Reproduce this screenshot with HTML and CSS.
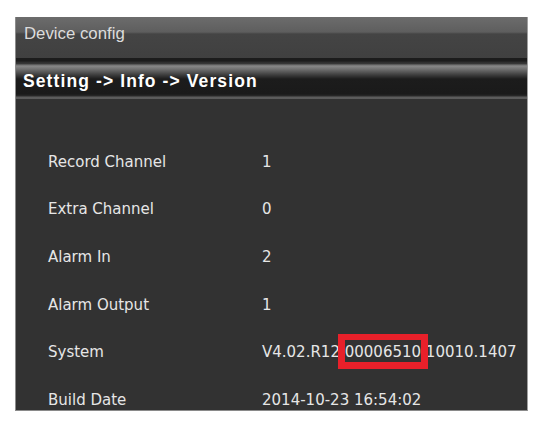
FILE: index.html
```html
<!DOCTYPE html>
<html>
<head>
<meta charset="utf-8">
<link rel="stylesheet" href="styles.css">
</head>
<body>
<div class="window">
  <div class="titlebar"><span class="title">Device config</span></div>
  <div class="divider"></div>
  <div class="crumb"><span class="crumb-text">Setting -&gt; Info -&gt; Version</span></div>
  <div class="content">
    <div class="row"><span class="label">Record Channel</span><span class="value">1</span></div>
    <div class="row"><span class="label">Extra Channel</span><span class="value">0</span></div>
    <div class="row"><span class="label">Alarm In</span><span class="value">2</span></div>
    <div class="row"><span class="label">Alarm Output</span><span class="value">1</span></div>
    <div class="row"><span class="label">System</span><span class="value">V4.02.R12 <span class="highlight">00006510</span> 10010.1407</span></div>
    <div class="row"><span class="label">Build Date</span><span class="value">2014-10-23 16:54:02</span></div>
  </div>
</div>
</body>
</html>
```

FILE: styles.css
```css
html, body {
  margin: 0;
  padding: 0;
  background: #ffffff;
}
body {
  padding: 17px 0 0 15px;
}
.window {
  width: 513px;
  height: 394px;
  box-sizing: border-box;
  border-left: 1px solid #8c8c8c;
  border-right: 1px solid #a0a0a0;
  border-bottom: 1px solid #8a8a8a;
  background: #323232;
  display: flex;
  flex-direction: column;
  overflow: hidden;
}
.titlebar {
  flex: none;
  height: 41px;
  box-sizing: border-box;
  padding: 7px 0 0 8px;
  background: linear-gradient(#6c6c6c 0px, #5e5e5e 15px, #444444 17px, #404040 100%);
}
.title {
  font-family: "Liberation Sans", Arial, sans-serif;
  font-size: 16.8px;
  color: #dcdcdc;
}
.divider {
  flex: none;
  height: 6px;
  background: linear-gradient(#1c1c1c 0px, #1c1c1c 3px, #2c2c2c 4px, #3a3a3a 6px);
}
.crumb {
  flex: none;
  height: 35px;
  box-sizing: border-box;
  padding: 7px 0 0 7px;
  background: linear-gradient(#4a4a4a 0px, #888888 2px, #7a7a7a 4px, #3c3c3c 11px, #1c1c1c 15px, #1a1a1a 30px, #2a2a2a 32px, #5c5c5c 33px, #5a5a5a 35px);
}
.crumb-text {
  font-family: "Liberation Sans", Arial, sans-serif;
  font-weight: bold;
  font-size: 17.5px;
  letter-spacing: 1.1px;
  color: #ffffff;
}
.content {
  flex: 1;
  min-height: 0;
  padding: 39px 0 0 32px;
  display: flex;
  flex-direction: column;
}
.row {
  flex: none;
  height: 47.6px;
  display: flex;
  align-items: center;
  font-family: "DejaVu Sans", Verdana, sans-serif;
  font-size: 15px;
  color: #e6e6e6;
}
.label {
  width: 214px;
  flex: none;
}
.value {
  white-space: pre;
}
.highlight {
  position: relative;
}
.highlight::after {
  content: "";
  position: absolute;
  left: -7px;
  right: -7px;
  top: -9px;
  bottom: -8px;
  border: 7px solid #e8202a;
  border-top-width: 6px;
}
```
